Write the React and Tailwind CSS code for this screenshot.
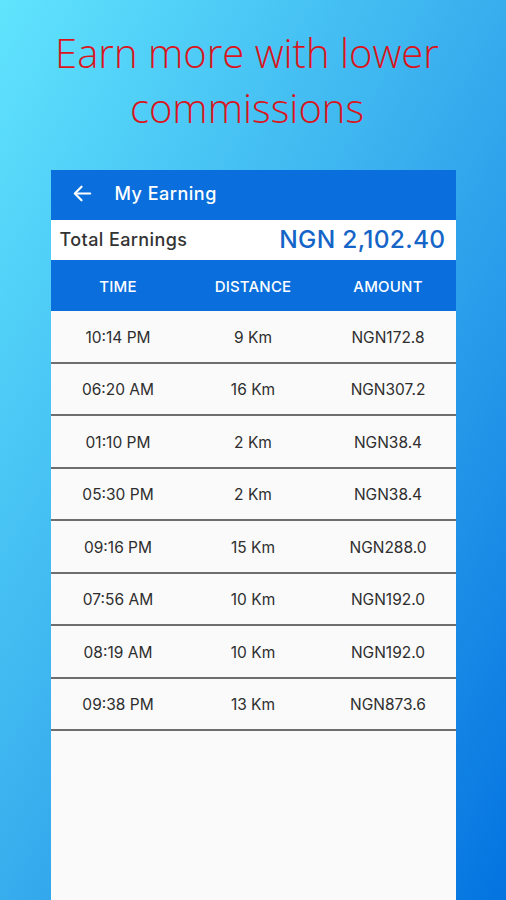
import React from "react";

const rows = [
  ["10:14 PM", "9 Km", "NGN172.8"],
  ["06:20 AM", "16 Km", "NGN307.2"],
  ["01:10 PM", "2 Km", "NGN38.4"],
  ["05:30 PM", "2 Km", "NGN38.4"],
  ["09:16 PM", "15 Km", "NGN288.0"],
  ["07:56 AM", "10 Km", "NGN192.0"],
  ["08:19 AM", "10 Km", "NGN192.0"],
  ["09:38 PM", "13 Km", "NGN873.6"],
];

export default function App() {
  const ui = { fontFamily: "Inter, 'Noto Sans', sans-serif" };
  return (
    <div className="w-[506px] h-[900px] overflow-hidden bg-linear-to-br from-[#60e4fd] via-[#3cb3ef] via-45% to-[#0373e0] flex flex-col items-center">
      <h1
        className="pt-[25px] w-full text-center text-[40px] leading-[55px] font-light text-[#d9151d] pr-[12px]"
        style={{ fontFamily: "'Open Sans', sans-serif" }}
      >
        Earn more with lower
        <br />
        commissions
      </h1>
      <div className="mt-[35px] w-[405px] flex-1 bg-[#fafafa] flex flex-col" style={ui}>
        <div className="h-[50px] bg-[#0a6fdc] flex items-center pl-[20px] pb-[3px]">
          <svg width="23" height="23" viewBox="0 0 24 24" fill="none" stroke="white" strokeWidth="2.3" strokeLinecap="round" strokeLinejoin="round">
            <path d="M20 12H5" />
            <path d="M11 5l-7 7 7 7" />
          </svg>
          <span className="ml-[21px] text-white text-[18px] font-medium tracking-[0.5px]">My Earning</span>
        </div>
        <div className="h-[40px] flex items-center justify-between pl-[9px] pr-[10px] pb-[2px] bg-white">
          <span className="text-[#333] text-[18px] font-medium tracking-[0.4px]">Total Earnings</span>
          <span className="text-[#1565c8] text-[24.5px] font-medium tracking-[0.3px]">NGN 2,102.40</span>
        </div>
        <div className="h-[51px] pt-[3px] bg-[#0a6fdc] grid grid-cols-3 items-center text-center text-white text-[15px] font-medium tracking-[0.2px]">
          <span>TIME</span>
          <span>DISTANCE</span>
          <span>AMOUNT</span>
        </div>
        {rows.map((r, i) => (
          <div
            key={i}
            className="h-[52.5px] pt-[2px] grid grid-cols-3 items-center text-center text-[#2e2e2e] text-[15.5px] border-b-2 border-[#6e6e6e]"
          >
            <span>{r[0]}</span>
            <span>{r[1]}</span>
            <span>{r[2]}</span>
          </div>
        ))}
      </div>
    </div>
  );
}
